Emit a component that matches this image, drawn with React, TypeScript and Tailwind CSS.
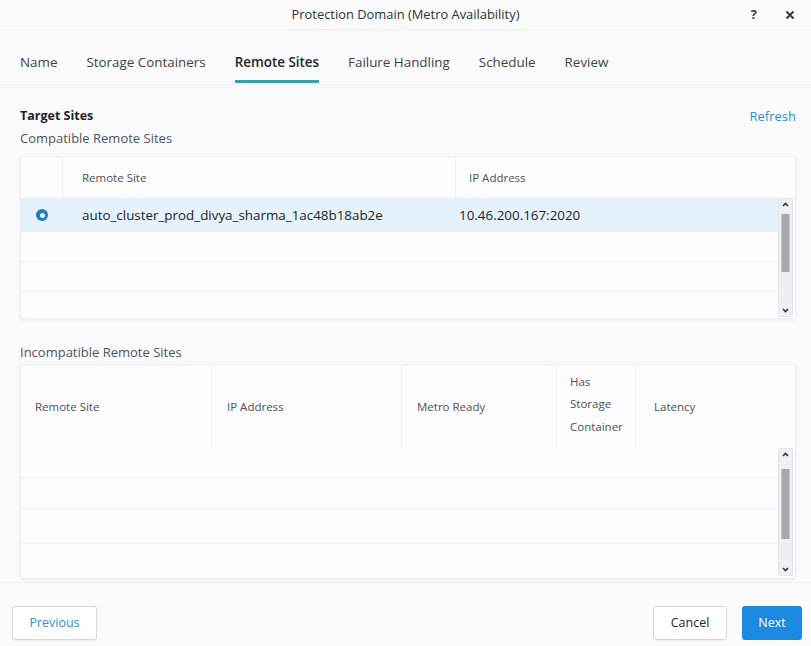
import React from "react";

const tabs = ["Name", "Storage Containers", "Remote Sites", "Failure Handling", "Schedule", "Review"];

const ScrollBar: React.FC<{ thumbTop: number; thumbHeight: number }> = ({ thumbTop, thumbHeight }) => (
  <div className="relative w-[15px] h-full bg-[#eef0f4] border border-[#e2e5ea] rounded-[2px] flex flex-col items-center justify-between py-[3px]">
    <svg width="7" height="5" viewBox="0 0 7 5">
      <path d="M1 4 L3.5 1.5 L6 4" stroke="#2d3138" strokeWidth="1.6" fill="none" />
    </svg>
    <div
      className="absolute left-[2px] right-[2px] bg-[#a7a8ab] border-x border-[#c4c5c8]"
      style={{ top: thumbTop, height: thumbHeight }}
    />
    <svg width="7" height="5" viewBox="0 0 7 5">
      <path d="M1 1 L3.5 3.5 L6 1" stroke="#2d3138" strokeWidth="1.6" fill="none" />
    </svg>
  </div>
);

const App: React.FC = () => {
  return (
    <div
      className="w-[811px] h-[646px] bg-[#fbfbfe] text-[#2b2f36] flex flex-col overflow-hidden"
      style={{ fontFamily: "'Open Sans', Lato, sans-serif" }}
    >
      {/* header */}
      <div className="relative h-[30px] flex items-center justify-center border-b border-[#f0f1f5]">
        <span className="text-[12.9px] text-[#2d3138]">Protection Domain (Metro Availability)</span>
        <div className="absolute right-[16px] top-0 h-[30px] flex items-center gap-[28px]">
          <span className="text-[13px] font-bold text-[#3a3e45]">?</span>
          <svg width="10" height="10" viewBox="0 0 10 10">
            <path d="M1.5 1.5 L8.5 8.5 M8.5 1.5 L1.5 8.5" stroke="#30343b" strokeWidth="1.8" />
          </svg>
        </div>
      </div>

      {/* tabs */}
      <div className="h-[55px] flex items-end gap-[29px] px-[20px] border-b border-[#f1f2f6]">
        {tabs.map((t) => (
          <div
            key={t}
            className={`text-[13.4px] leading-[18px] pb-[9px] border-b-[3px] mb-[1px] ${
              t === "Remote Sites" ? "border-[#3a9eae] text-[#1f232a] font-semibold" : "border-transparent text-[#3b3f46]"
            }`}
          >
            {t}
          </div>
        ))}
      </div>

      <div className="px-[15px] flex-1 flex flex-col">
        <div className="flex justify-between items-center pt-[23px] pl-[5px]">
          <span className="text-[12.5px] font-bold leading-[16px] text-[#1f232a]">Target Sites</span>
          <span className="text-[13px] leading-[16px] text-[#2c93c8]">Refresh</span>
        </div>
        <div className="mt-[6px] pl-[5px] text-[13px] leading-[16px] text-[#4e535b]">Compatible Remote Sites</div>

        {/* compatible table */}
        <div className="mt-[10px] ml-[5px] w-[776px] h-[163px] bg-[#fdfdff] border border-[#eceef3] rounded-[3px] shadow-[0_1px_3px_rgba(0,0,0,0.05)] flex flex-col">
          <div className="h-[41px] flex text-[11.5px] text-[#4c5058]">
            <div className="w-[42px] border-r border-[#eff1f5]" />
            <div className="w-[393px] border-r border-[#eff1f5] flex items-center pl-[19px]">Remote Site</div>
            <div className="flex-1 flex items-center pl-[13px]">IP Address</div>
          </div>
          <div className="flex-1 flex pr-[2px] pb-[1px]">
            <div className="flex-1 flex flex-col">
              <div className="h-[34px] bg-[#e5f1fb] flex items-center text-[13.4px] text-[#1f232a]">
                <div className="w-[42px] flex justify-center">
                  <div className="w-[12px] h-[12px] rounded-full bg-[#1b7fc0] flex items-center justify-center">
                    <div className="w-[5px] h-[5px] rounded-full bg-[#e5f1fb]" />
                  </div>
                </div>
                <div className="w-[393px] pl-[19px]">auto_cluster_prod_divya_sharma_1ac48b18ab2e</div>
                <div className="pl-[3px]">10.46.200.167:2020</div>
              </div>
              <div className="h-[30px] border-b border-[#f0f1f5]" />
              <div className="h-[30px] border-b border-[#f0f1f5]" />
              <div className="flex-1" />
            </div>
            <ScrollBar thumbTop={15} thumbHeight={58} />
          </div>
        </div>

        <div className="mt-[25px] pl-[5px] text-[13px] leading-[16px] text-[#4e535b]">Incompatible Remote Sites</div>

        {/* incompatible table */}
        <div className="mt-[4px] ml-[5px] w-[776px] h-[215px] bg-[#fdfdff] border border-[#eceef3] rounded-[3px] shadow-[0_1px_3px_rgba(0,0,0,0.05)] flex flex-col">
          <div className="h-[83px] flex text-[11.5px] text-[#4c5058]">
            <div className="w-[191px] border-r border-[#eff1f5] flex items-center pl-[14px]">Remote Site</div>
            <div className="w-[190px] border-r border-[#eff1f5] flex items-center pl-[15px]">IP Address</div>
            <div className="w-[155px] border-r border-[#eff1f5] flex items-center pl-[15px]">Metro Ready</div>
            <div className="w-[79px] border-r border-[#eff1f5] flex items-center pl-[13px] leading-[22.5px] overflow-hidden">
              <div className="mb-[4px] whitespace-nowrap">
                Has
                <br />
                Storage
                <br />
                Container
              </div>
            </div>
            <div className="flex-1 flex items-center pl-[18px]">Latency</div>
          </div>
          <div className="flex-1 flex pr-[2px] pb-[2px]">
            <div className="flex-1 flex flex-col">
              <div className="h-[30px] border-b border-[#f0f1f5]" />
              <div className="h-[31px] border-b border-[#f0f1f5]" />
              <div className="h-[35px] border-b border-[#f0f1f5]" />
              <div className="flex-1" />
            </div>
            <ScrollBar thumbTop={20} thumbHeight={70} />
          </div>
        </div>
      </div>

      {/* footer */}
      <div className="h-[58px] mb-[6px] border-t border-[#eff0f4] flex items-end justify-between px-[12px]">
        <button className="w-[85px] h-[34px] bg-white border border-[#d5d8de] rounded-[3px] text-[12.5px] text-[#2c93c8] shadow-[0_1px_1px_rgba(0,0,0,0.06)]">
          Previous
        </button>
        <div className="flex gap-[15px] mr-[-3px]">
          <button className="w-[74px] h-[34px] bg-white border border-[#d5d8de] rounded-[3px] text-[12.5px] text-[#1f232a] shadow-[0_1px_1px_rgba(0,0,0,0.06)]">
            Cancel
          </button>
          <button className="w-[60px] h-[34px] bg-[#1b8ae0] rounded-[3px] text-[12.5px] text-white">
            Next
          </button>
        </div>
      </div>
    </div>
  );
};

export default App;
